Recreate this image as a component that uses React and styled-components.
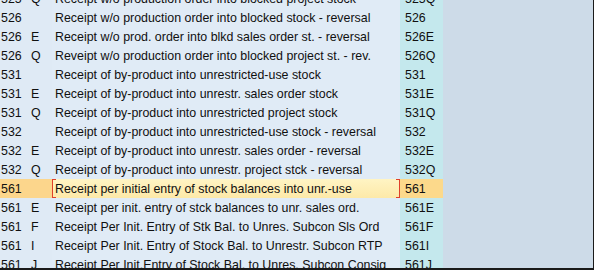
import React from "react";
import styled, { createGlobalStyle } from "styled-components";

const Global = createGlobalStyle`
  html, body { margin: 0; padding: 0; background: #ffffff; }
  body { font-family: "Liberation Sans", Arial, sans-serif; }
`;

const Frame = styled.div`
  width: 593px;
  height: 268px;
  overflow: hidden;
  border-right: 1px solid #1a1a1a;
  border-bottom: 2px solid #1a1a1a;
  background: #cddbe8;
  display: flex;
`;

const Table = styled.div`
  margin-top: -11px;
  display: grid;
  grid-template-columns: 31px 21px 348px 43px;
  grid-auto-rows: 19px;
  font-size: 12.4px;
  color: #101010;
`;

const Cell = styled.div`
  display: flex;
  align-items: center;
  white-space: nowrap;
  overflow: hidden;
  padding-left: ${p => p.pad || 0}px;
  background: ${p => (p.sel ? "#fcd68c" : "#dfeaf5")};
`;

const TextCell = styled(Cell)`
  position: relative;
  padding-left: 3px;
  background: ${p => (p.sel ? "linear-gradient(#fff4c4, #fde9a8)" : "#e0ebf6")};
`;

const CodeCell = styled(Cell)`
  padding-left: 5px;
  background: ${p => (p.sel ? "#fcd98b" : "#c4e8ed")};
`;

const Corner = styled.span`
  position: absolute;
  width: 3px;
  height: 17px;
  top: 0;
  border: 1px solid #e0402a;
  ${p => (p.right ? "right: 0; border-left: none;" : "left: 0; border-right: none;")}
`;

const rows = [
  ["525", "Q", "Receipt w/o production order into blocked project stock", "525Q"],
  ["526", "", "Receipt w/o production order into blocked stock - reversal", "526"],
  ["526", "E", "Receipt w/o prod. order into blkd sales order st. - reversal", "526E"],
  ["526", "Q", "Reveipt w/o production order into blocked project st. - rev.", "526Q"],
  ["531", "", "Receipt of by-product into unrestricted-use stock", "531"],
  ["531", "E", "Receipt of by-product into unrestr. sales order stock", "531E"],
  ["531", "Q", "Receipt of by-product into unrestricted project stock", "531Q"],
  ["532", "", "Receipt of by-product into unrestricted-use stock - reversal", "532"],
  ["532", "E", "Receipt of by-product into unrestr. sales order - reversal", "532E"],
  ["532", "Q", "Receipt of by-product into unrestr. project stck - reversal", "532Q"],
  ["561", "", "Receipt per initial entry of stock balances into unr.-use", "561", true],
  ["561", "E", "Receipt per init. entry of stck balances to unr. sales ord.", "561E"],
  ["561", "F", "Receipt Per Init. Entry of Stk Bal. to Unres. Subcon Sls Ord", "561F"],
  ["561", "I", "Receipt Per Init. Entry of Stock Bal. to Unrestr. Subcon RTP", "561I"],
  ["561", "J", "Receipt Per Init.Entry of Stock Bal. to Unres. Subcon Consig", "561J"],
];

export default function App() {
  return (
    <>
      <Global />
      <Frame>
        <Table>
          {rows.map(([mvt, ind, text, code, sel], i) => (
            <React.Fragment key={i}>
              <Cell sel={sel} pad={1}>{mvt}</Cell>
              <Cell sel={sel}>{ind}</Cell>
              <TextCell sel={sel}>
                {sel && <Corner />}
                {text}
                {sel && <Corner right />}
              </TextCell>
              <CodeCell sel={sel}>{code}</CodeCell>
            </React.Fragment>
          ))}
        </Table>
      </Frame>
    </>
  );
}
